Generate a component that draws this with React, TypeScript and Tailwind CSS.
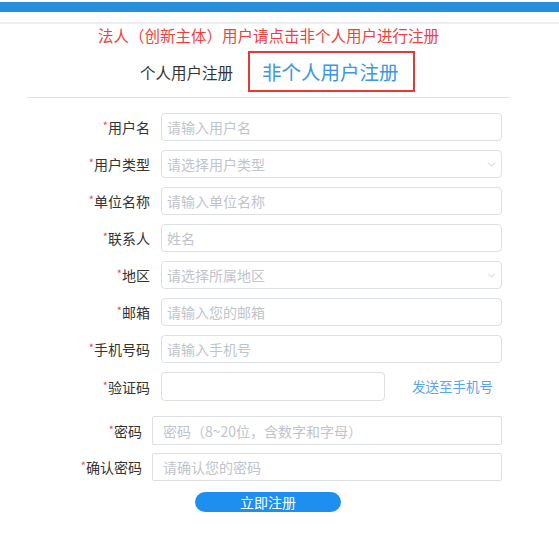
import { ChevronDown } from 'lucide-react'

interface Field {
  label: string
  placeholder: string
  select?: boolean
}

const fields: Field[] = [
  { label: '用户名', placeholder: '请输入用户名' },
  { label: '用户类型', placeholder: '请选择用户类型', select: true },
  { label: '单位名称', placeholder: '请输入单位名称' },
  { label: '联系人', placeholder: '姓名' },
  { label: '地区', placeholder: '请选择所属地区', select: true },
  { label: '邮箱', placeholder: '请输入您的邮箱' },
  { label: '手机号码', placeholder: '请输入手机号' },
]

function Label({ text, width }: { text: string; width: string }) {
  return (
    <label className={`${width} shrink-0 h-[28px] flex items-center justify-end text-[14px] leading-[20px] text-[#333]`}>
      <span className="text-[11px] leading-none text-[#f04a4a] self-start mt-[7px]">*</span>
      {text}
    </label>
  )
}

export default function App() {
  return (
    <div className="w-[559px] min-h-[534px] bg-white font-['Noto_Sans_CJK_SC',sans-serif]">
      <div className="h-[2px] bg-white" />
      <div className="h-[10px] bg-[#2a8fdb]" />
      <div className="h-[10px] bg-[#fbfdff]" />
      <div className="h-[2px] bg-[#eeeeee]" />

      <div className="ml-[27px] w-[483px]">
        <p className="mt-px h-[20px] text-center text-[15.5px] leading-[20px] text-[#f2413d]">
          法人（创新主体）用户请点击非个人用户进行注册
        </p>

        <div className="mt-[6px] flex items-center pl-[113px]">
          <span className="text-[15.5px] leading-[20px] text-[#333]">个人用户注册</span>
          <div className="ml-[15px] w-[167px] h-[41px] border-2 border-[#e53935] flex items-center pl-[12px]">
            <span className="text-[19.5px] leading-[24px] text-[#3d96e3]">非个人用户注册</span>
          </div>
        </div>

        <div className="mt-[5px] h-px bg-[#e3e3e3]" />

        <div className="mt-[15px] pr-[8px]">
          {fields.map(f => (
            <div key={f.label} className="flex items-center h-[28px] mb-[9px]">
              <Label text={f.label} width="w-[123px]" />
              {f.select ? (
                <div className="ml-[11px] flex-1 h-[28px] border border-[#dcdfe6] rounded-[4px] flex items-center justify-between pl-[5px] pr-[3px]">
                  <span className="text-[14px] text-[#c0c4cc]">{f.placeholder}</span>
                  <ChevronDown size={13} strokeWidth={1.2} className="text-[#b4b8bf]" />
                </div>
              ) : (
                <input
                  placeholder={f.placeholder}
                  className="ml-[11px] flex-1 h-[28px] border border-[#dcdfe6] rounded-[4px] pl-[5px] text-[14px] outline-none placeholder:text-[#c0c4cc]"
                />
              )}
            </div>
          ))}

          <div className="flex items-center h-[29px] mb-[15px]">
            <Label text="验证码" width="w-[123px]" />
            <input className="ml-[11px] w-[224px] h-[29px] border border-[#dcdfe6] rounded-[4px] pl-[5px] text-[14px] outline-none" />
            <a className="ml-[27px] text-[13.5px] text-[#5aa6ec] cursor-pointer">发送至手机号</a>
          </div>

          <div className="flex items-center h-[29px] mb-[8px]">
            <Label text="密码" width="w-[115px]" />
            <input
              type="text"
              placeholder="密码（8~20位，含数字和字母）"
              className="ml-[10px] flex-1 h-[29px] border border-[#dcdfe6] rounded-[2px] pl-[10px] text-[14px] outline-none placeholder:text-[#c0c4cc]"
            />
          </div>

          <div className="flex items-center h-[28px] mb-[8px]">
            <Label text="确认密码" width="w-[115px]" />
            <input
              type="text"
              placeholder="请确认您的密码"
              className="ml-[10px] flex-1 h-[28px] border border-[#dcdfe6] rounded-[2px] pl-[10px] text-[14px] outline-none placeholder:text-[#c0c4cc]"
            />
          </div>

          <div className="pl-[168px]">
            <button className="w-[146px] h-[20px] rounded-full bg-[#1d8ff0] text-white text-[14px] leading-[20px]">
              立即注册
            </button>
          </div>
        </div>
      </div>
    </div>
  )
}
